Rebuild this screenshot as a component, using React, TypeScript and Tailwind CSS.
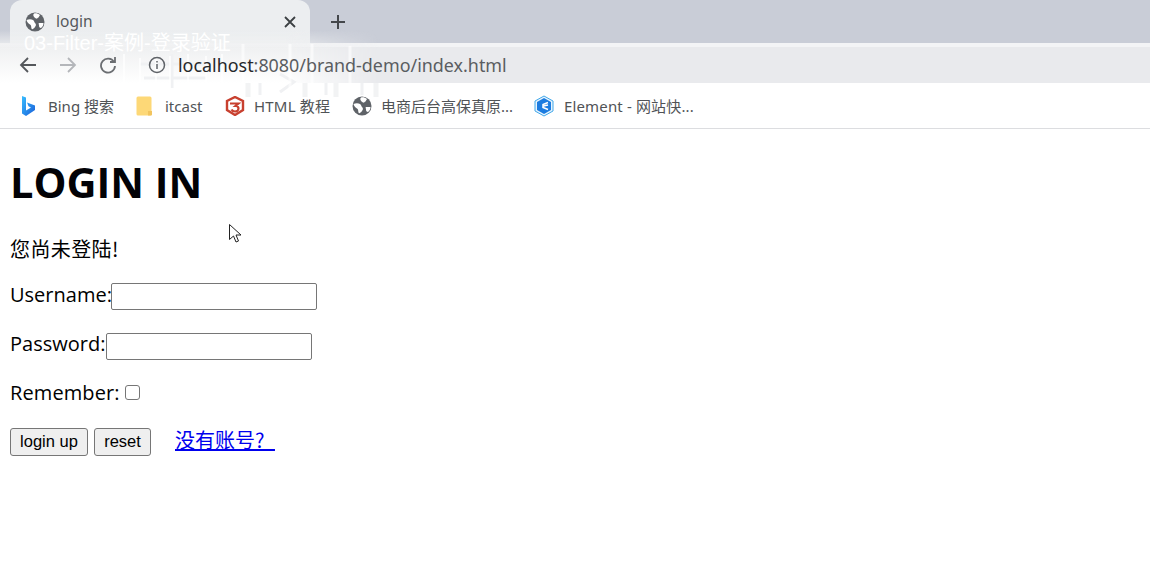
import React from "react";

const ui = { fontFamily: '"Noto Sans", "Noto Sans CJK SC", sans-serif' };
const page = { fontFamily: '"Open Sans", "Noto Sans CJK SC", sans-serif' };
const cjk = { fontFamily: '"Noto Sans CJK SC", sans-serif' };
const btn = { fontFamily: '"Liberation Sans", sans-serif' };

function Globe({ size = 20 }: { size?: number }) {
  return (
    <svg width={size} height={size} viewBox="0 0 20 20">
      <circle cx="10" cy="10" r="9.5" fill="#5f6368" />
      <path d="M1.500 8c2-1 5-1 6.500 0s1 2 2 3 1.500 2 0 4-3 3-3.500 1.500 0-3-1.500-4-3-2-3.500-4.500z" fill="#fff" />
      <path d="M9 1.500c2-.5 4 0 6 1.500l-1.500 2.500c-1 .5-1.500 1.500-2.500 1S9 5 8.500 4 8.500 2 9 1.500zM14 11h4.500c0 2-1 4-2.500 5-1.500 0-2-1-2-2.500s-1-1.500 0-2.500z" fill="#fff" />
    </svg>
  );
}

function Bing() {
  return (
    <svg width="15" height="20" viewBox="0 0 15 20">
      <defs>
        <linearGradient id="bing" x1="0" y1="0" x2="1" y2="1">
          <stop offset="0" stopColor="#37bdff" />
          <stop offset="1" stopColor="#1a5fd8" />
        </linearGradient>
      </defs>
      <path d="M1 0l4 1.500v13l5-3-2.500-1.200-1.500-3.800 8 3v4.500L5 20l-4-2.500z" fill="url(#bing)" />
    </svg>
  );
}

function Folder() {
  return (
    <svg width="17" height="20" viewBox="0 0 17 20">
      <rect x="0.500" y="0.500" width="15" height="19" rx="1.500" fill="#fdd877" />
      <path d="M12 15h4v3.500a1 1 0 0 1-1 1h-3z" fill="#f2c45e" />
    </svg>
  );
}

function Html5() {
  return (
    <svg width="20" height="20" viewBox="0 0 20 20">
      <path d="M10 1l8 4v9l-8 5-8-5V5z" fill="none" stroke="#c8402f" strokeWidth="2.400" />
      <path d="M5 7.500h8.500l-3 2.500c2 0 3 .5 3 2.500s-2 3-3.500 3-3-1-3.500-2" fill="none" stroke="#c8402f" strokeWidth="2.200" />
    </svg>
  );
}

function ElementIcon() {
  return (
    <svg width="20" height="22" viewBox="0 0 20 22">
      <path d="M10 1l9 5v10l-9 5-9-5V6z" fill="#e8f4fd" stroke="#41a8ea" strokeWidth="1" />
      <path d="M10 3l7 4v8l-7 4-7-4V7z" fill="#1c7ce0" />
      <path d="M14 7.500l-5 2v3l5 2M9.500 11l4.500-1" fill="none" stroke="#fff" strokeWidth="1.500" />
    </svg>
  );
}

function Bookmark({ icon, label, gap, width, track = "" }: { icon: React.ReactNode; label: string; gap: string; width: string; track?: string }) {
  return (
    <div className={`flex items-center ${gap} ${width} shrink-0`}>
      {icon}
      <span className={`text-[15px] leading-5 text-[#505356] whitespace-nowrap ${track}`}>{label}</span>
    </div>
  );
}

function Watermark() {
  return (
    <svg className="absolute left-[100px] top-[30px]" width="290" height="72" viewBox="0 0 290 72" fill="none">
      <g stroke="#f0f1f3" strokeWidth="3">
        <path d="M40 34h66M44 48h62M72 24v34M160 53v12M180 44l14 8-14 10M226 53v12M262 53v12" />
      </g>
      <g stroke="#f2f3f4" strokeWidth="5">
        <path d="M148 53v14M205 53v14M236 53v14M276 53v14" />
      </g>
      <g stroke="#fff" strokeWidth="1.500" opacity="0.9">
        <path d="M24 24v42M40 28v34M56 26v38M70 26v38M88 24v42M106 26v38M122 24v40" />
      </g>
      <g stroke="#fff" strokeWidth="3" opacity="0.6">
        <path d="M143 14v52M190 14v48M212 14v42M250 16v40" />
      </g>
    </svg>
  );
}

export default function App() {
  return (
    <div className="relative w-[1150px] h-[586px] overflow-hidden bg-white text-black" style={ui}>
      <header className="h-[129px] border-b border-[#dcdde0] bg-white">
        <div className="h-[43px] bg-[#c9cdd7] flex pl-[10px]">
          <div className="w-[300px] h-[43px] rounded-t-[12px] bg-[#eceef0] flex items-center pl-[15px] pr-[13px]">
            <Globe />
            <span className="ml-[11px] mt-[1px] text-[15.500px] text-[#55585c]">login</span>
            <svg className="ml-auto" width="14" height="14" viewBox="0 0 14 14">
              <path d="M2 2l10 10M12 2L2 12" stroke="#3c4043" strokeWidth="1.800" />
            </svg>
          </div>
          <svg className="ml-[20px] mt-[14px]" width="16" height="16" viewBox="0 0 16 16">
            <path d="M8 1v14M1 8h14" stroke="#44474b" strokeWidth="2" />
          </svg>
        </div>
        <div className="h-[40px] bg-[#e9eaed] border-t-[4px] border-[#f3f4f6]">
          <div className="relative z-10 h-full flex items-center pl-[19px]">
            <svg width="18" height="18" viewBox="0 0 18 18">
              <path d="M17 9H2M9 2L2 9l7 7" fill="none" stroke="#55585c" strokeWidth="1.800" />
            </svg>
            <svg className="ml-[22px]" width="18" height="18" viewBox="0 0 18 18">
              <path d="M1 9h15M9 2l7 7-7 7" fill="none" stroke="#b4b6ba" strokeWidth="1.800" />
            </svg>
            <svg className="ml-[22px]" width="18" height="18" viewBox="0 0 18 18">
              <path d="M15 6a7 7 0 1 0 1 4M16 1v5h-5" fill="none" stroke="#6b6e72" strokeWidth="1.800" />
            </svg>
            <svg className="ml-[31px]" width="18" height="18" viewBox="0 0 18 18">
              <circle cx="9" cy="9" r="7.500" fill="none" stroke="#5f6368" strokeWidth="1.500" />
              <path d="M9 8v5M9 5v1.500" stroke="#5f6368" strokeWidth="1.500" />
            </svg>
            <div className="ml-[12px] text-[17.900px] leading-6 text-[#5a5d61]">
              <span className="text-[#26282b]">localhost</span>:8080/brand-demo/index.html
            </div>
          </div>
        </div>
        <div className="h-[45px] flex items-center pl-[21px]">
          <Bookmark icon={<Bing />} label="Bing 搜索" gap="gap-[12px]" width="w-[115px]" />
          <Bookmark icon={<Folder />} label="itcast" gap="gap-[12px]" width="w-[89px]" />
          <Bookmark icon={<Html5 />} label="HTML 教程" gap="gap-[9px]" width="w-[127px]" track="tracking-[0.200px]" />
          <Bookmark icon={<Globe />} label="电商后台高保真原..." gap="gap-[9px]" width="w-[182px]" />
          <Bookmark icon={<ElementIcon />} label="Element - 网站快..." gap="gap-[10px]" width="w-[170px]" track="tracking-[0.150px]" />
        </div>
      </header>

      <main className="pl-[10px] text-[20px] leading-[28px]" style={page}>
        <h1 className="mt-[25px] text-[41.500px] leading-[56px] font-bold text-[#020206]">LOGIN IN</h1>
        <p className="mt-[25px] tracking-[0.400px]" style={cjk}>您尚未登陆!</p>
        <div className="mt-[18px] flex items-start h-[28px]">
          <span className="w-[101px]">Username:</span>
          <input className="mt-[2px] w-[206px] h-[27px] border border-[#767676] rounded-[2px] bg-white" />
        </div>
        <div className="mt-[21px] flex items-start h-[28px]">
          <span className="w-[96px]">Password:</span>
          <input className="mt-[3px] w-[206px] h-[27px] border border-[#767676] rounded-[2px] bg-white" />
        </div>
        <div className="mt-[21px] flex items-start h-[28px]">
          <span className="w-[110px] tracking-[0.100px]">Remember:</span>
          <span className="ml-[5px] mt-[6px] w-[15px] h-[15px] border border-[#767676] rounded-[3px] bg-white" />
        </div>
        <div className="mt-[21px] flex items-center">
          <button className="w-[78px] h-[28px] pb-[2px] border border-[#767676] rounded-[3px] bg-[#efefef] text-[16.500px] leading-5 text-black" style={btn}>login up</button>
          <button className="ml-[6px] w-[57px] h-[28px] pb-[2px] border border-[#767676] rounded-[3px] bg-[#efefef] text-[16.500px] leading-5 text-black" style={btn}>reset</button>
          <a href="#" className="ml-[24px] -mt-[5px] text-[#0000ee] underline whitespace-pre [word-spacing:6px]" style={cjk}>{"没有账号?\u00a0"}</a>
        </div>
      </main>

      <div className="absolute left-0 top-[30px] z-0 w-[380px] h-[53px] bg-gradient-to-b from-transparent via-[#f0f1f2] via-35% to-white [mask-image:linear-gradient(to_right,black_75%,transparent)]" />
      <div className="absolute left-0 top-0 w-full h-full z-0 pointer-events-none">
        <Watermark />
      </div>

      <div className="absolute z-20 left-[24px] top-[31px] text-[20px] leading-6 text-white" style={{ fontFamily: '"Liberation Sans", "Noto Sans CJK SC", sans-serif' }}>
        03-Filter-案例-登录验证
      </div>

      <svg className="absolute left-[229px] top-[224px]" width="16" height="21" viewBox="0 0 16 21">
        <path d="M0.500 0.500v15l4-3.500 2.500 6 2.500-1-2.500-6h5z" fill="#fff" stroke="#222" strokeWidth="1" />
      </svg>
    </div>
  );
}
